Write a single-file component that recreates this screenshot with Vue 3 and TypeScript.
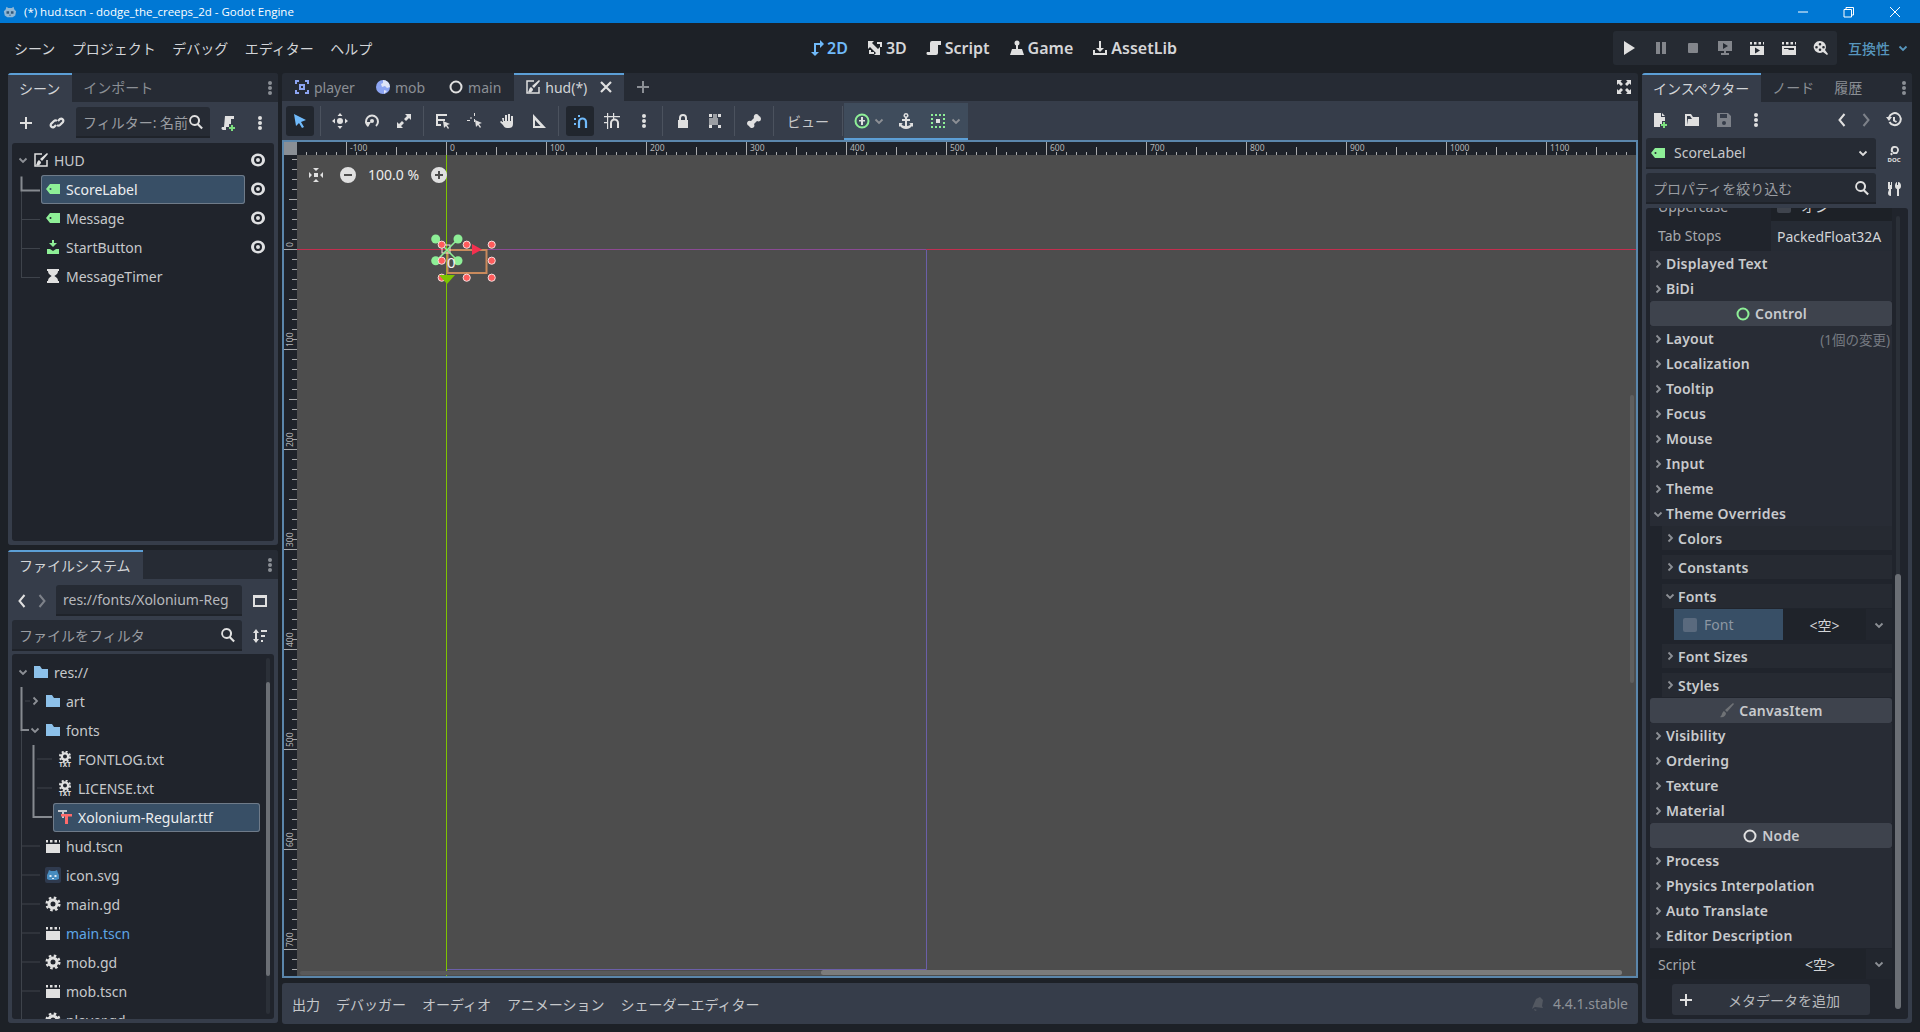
<template>
  <div class="editor">
    <!-- иконки -->
    <svg class="defs" width="0" height="0">
      <defs>
        <symbol id="plus" viewBox="0 0 16 16"><path d="M7 2h2v5h5v2H9v5H7V9H2V7h5z" /></symbol>
        <symbol id="link" viewBox="0 0 16 16"><g fill="none" stroke="currentColor" stroke-width="2.2"><path d="M7 10 5 12a2.2 2.2 0 0 1-3-3l3-3a2.2 2.2 0 0 1 3 0" /><path d="M9 6l2-2a2.2 2.2 0 0 1 3 3l-3 3a2.2 2.2 0 0 1-3 0" /></g></symbol>
        <symbol id="search" viewBox="0 0 16 16"><path d="M6.5 1a5.5 5.5 0 0 1 4.4 8.8l4 4-1.500 1.500-4-4A5.500 5.500 0 1 1 6.500 1zm0 2a3.500 3.500 0 1 0 0 7 3.500 3.500 0 0 0 0-7z" /></symbol>
        <symbol id="dots" viewBox="0 0 16 16"><circle cx="8" cy="3" r="2" /><circle cx="8" cy="8" r="2" /><circle cx="8" cy="13" r="2" /></symbol>
        <symbol id="scriptadd" viewBox="0 0 16 16"><path d="M5 1h9v3h-3v5H9v3H6v3H3a2 2 0 0 1-1-3h2z" /><path fill="#7de07f" d="M11 10h2v2h2v2h-2v2h-2v-2H9v-2h2z" /></symbol>
        <symbol id="eye" viewBox="0 0 16 16"><path fill-rule="evenodd" d="M8 1.500c4 0 7 3 7 6.500s-3 6.500-7 6.500S1 11.500 1 8s3-6.500 7-6.500zm0 2.500a4 4 0 1 0 0 8 4 4 0 0 0 0-8zm0 2a2 2 0 1 1 0 4 2 2 0 0 1 0-4z" /></symbol>
        <symbol id="chev" viewBox="0 0 12 12"><path fill="none" stroke="currentColor" stroke-width="1.8" d="M2.500 4.500 6 8l3.500-3.500" /></symbol>
        <symbol id="chevr" viewBox="0 0 12 12"><path fill="none" stroke="currentColor" stroke-width="1.8" d="M4.500 2.500 8 6 4.500 9.500" /></symbol>
        <symbol id="left" viewBox="0 0 16 16"><path fill="none" stroke="currentColor" stroke-width="2" d="M10.500 2 5.500 8l5 6" /></symbol>
        <symbol id="right" viewBox="0 0 16 16"><path fill="none" stroke="currentColor" stroke-width="2" d="M5.500 2l5 6-5 6" /></symbol>
        <symbol id="tag" viewBox="0 0 16 16"><path fill="#8eef97" fill-rule="evenodd" d="M5 3h10v10H5L1 8zm.5 4a1 1 0 1 0 0 2 1 1 0 0 0 0-2z" /></symbol>
        <symbol id="button" viewBox="0 0 16 16"><path fill="#8eef97" d="M7 1h2v3h3L8 8 4 4h3zM2 10h3l3 2 3-2h3v5H2z" /></symbol>
        <symbol id="hourglass" viewBox="0 0 16 16"><path d="M2 1h12v2h-1c0 3-2.500 4-3.500 5 1 1 3.500 2 3.500 5h1v2H2v-2h1c0-3 2.500-4 3.500-5C5.500 7 3 6 3 3H2z" /></symbol>
        <symbol id="control" viewBox="0 0 16 16"><path fill="none" stroke="currentColor" stroke-width="1.5" d="M9 2H2v12h12V8" /><path d="M14 1l1 1-6 7-2-2zM6 8l2 2c0 3-3 4-5 3 1-1 1-4 3-5z" /></symbol>
        <symbol id="folder" viewBox="0 0 16 16"><path fill="#8dc1ea" d="M1 2h6l2 3h6v9H1z" /></symbol>
        <symbol id="gear" viewBox="0 0 16 16"><circle cx="8" cy="8" r="4" fill="none" stroke="currentColor" stroke-width="3" /><circle cx="8" cy="8" r="6.3" fill="none" stroke="currentColor" stroke-width="2.5" stroke-dasharray="2.5 2.45" /></symbol>
        <symbol id="txtgear" viewBox="0 0 16 16"><g transform="translate(1.6 -.8) scale(.8)"><circle cx="8" cy="8" r="4" fill="none" stroke="currentColor" stroke-width="3" /><circle cx="8" cy="8" r="6.3" fill="none" stroke="currentColor" stroke-width="2.5" stroke-dasharray="2.5 2.45" /></g><text x="8" y="16" font-size="6.5" font-weight="700" text-anchor="middle" fill="currentColor">TXT</text></symbol>
        <symbol id="clap" viewBox="0 0 16 16"><path d="M1 6h14v9H1zM1 2h2v2.500H1zM5 2h2.500v2.500H5zM9.500 2H12v2.500H9.500zM14 2h1v2.500h-1z" /></symbol>
        <symbol id="font" viewBox="0 0 16 16"><path fill="#c9cbcf" d="M1 1h9v2H7v6H5V3H1z" /><path fill="#ff6b6b" d="M4 5h11v2.500h-4V15H8V7.500H4z" /></symbol>
        <symbol id="godot" viewBox="0 0 16 16"><rect width="16" height="16" rx="2" fill="#2f3a4e" /><path fill="#478cbf" d="M3 6l1-3 2 1h4l2-1 1 3 1 2v4l-3 1H4l-2-1V8z" /><path fill="#dfe9f2" d="M4.500 8h2v2h-2zM9.500 8h2v2h-2zM7 11h2v1H7z" /></symbol>
        <symbol id="godotw" viewBox="0 0 16 16"><path fill="#8fb7d6" d="M3 5l1-3 2 1.500h4L12 2l1 3 2 2-1 5-3 2H5l-3-2-1-5z" /><path fill="#33597a" d="M4 7h3v3H4zM9 7h3v3H9zM7 11h2v1H7z" /></symbol>
        <symbol id="pane" viewBox="0 0 16 16"><path fill-rule="evenodd" d="M1 2h14v12H1zm2 3v7h10V5z" /></symbol>
        <symbol id="sort" viewBox="0 0 16 16"><path d="M4 1l3 4H5v6h2l-3 4-3-4h2V5H1zM9 2h6v2H9zM9 7h4v2H9zM9 12h2v2H9z" /></symbol>
        <symbol id="node2d" viewBox="0 0 16 16"><path fill="#8da5f3" fill-rule="evenodd" d="M1 1h4v2H3v2H1zm10 0h4v4h-2V3h-2zM1 11h2v2h2v2H1zm12 0h2v4h-4v-2h2zM5 5h6v6H5zm2 2v2h2V7z" /></symbol>
        <symbol id="globe" viewBox="0 0 16 16"><circle cx="8" cy="8" r="7" fill="#8da5f3" /><path fill="#dfe4f7" d="M8 1a7 7 0 0 1 7 7l-3 1-2-2-3 1-1-3 2-1zM9 11l3 1-3 3z" /></symbol>
        <symbol id="ring" viewBox="0 0 16 16"><circle cx="8" cy="8" r="5.5" fill="none" stroke="currentColor" stroke-width="2" /></symbol>
        <symbol id="close" viewBox="0 0 16 16"><path fill="none" stroke="currentColor" stroke-width="2.2" d="M3 3l10 10M13 3 3 13" /></symbol>
        <symbol id="full" viewBox="0 0 16 16"><path d="M1 1h5L4.500 2.500 7 5 5 7 2.500 4.500 1 6zm14 0v5l-1.500-1.500L11 7 9 5l2.500-2.500L10 1zM1 15v-5l1.500 1.500L5 9l2 2-2.500 2.500L6 15zm14 0h-5l1.500-1.500L9 11l2-2 2.500 2.500L15 10z" /></symbol>
        <symbol id="select" viewBox="0 0 16 16"><path fill="#70bafa" d="M2 1l12 6-5 2 3 5-2 1-3-5-3 3z" /></symbol>
        <symbol id="move" viewBox="0 0 16 16"><path d="M8 0l2.500 3h-5zM8 16l-2.500-3h5zM0 8l3-2.500v5zM16 8l-3 2.500v-5z" /><circle cx="8" cy="8" r="3" /></symbol>
        <symbol id="rotate" viewBox="0 0 16 16"><path fill="none" stroke="currentColor" stroke-width="2" d="M4 13a6 6 0 1 1 8 0" /><circle cx="8" cy="8" r="2" /><path d="M1 9h6l-3 5z" /></symbol>
        <symbol id="scale" viewBox="0 0 16 16"><path d="M9 1h6v6l-2-2-3 3-2-2 3-3zM7 15H1V9l2 2 3-3 2 2-3 3z" /></symbol>
        <symbol id="list" viewBox="0 0 16 16"><path d="M1 1h11v2H3v3h7v2H3v3h3v2H1z" /><path d="M8 8l7 3-3 1 2 3-1 1-2-3-2 2z" /></symbol>
        <symbol id="pivot" viewBox="0 0 16 16"><path d="M7 0h1v3H7zM7 6h1v3H7zM0 7h3v1H0zM4 4l1 1-1 1-1-1z" /><path d="M8 7l7 3-3 1 2 3-1 1-2-3-2 2z" /></symbol>
        <symbol id="hand" viewBox="0 0 16 16"><path d="M3 5h2v3h1V2h2v6h1V1h2v7h1V3h2v8c0 3-2 4-4 4H8c-2 0-3-1-4-3L1 9l1-1 2 1z" /></symbol>
        <symbol id="ruler" viewBox="0 0 16 16"><path fill-rule="evenodd" d="M2 1l13 14H2zm2 6v6h5.500z" /></symbol>
        <symbol id="snap" viewBox="0 0 16 16"><path fill="none" stroke="#70bafa" stroke-width="2.2" d="M7 15V9a3.500 3.500 0 0 1 7 0v6" /><path fill="#70bafa" d="M2 5h2v2H2zM2 10h2v2H2zM6 2h2v2H6z" /></symbol>
        <symbol id="grid" viewBox="0 0 16 16"><path d="M3 0h1.200v16H3zM9 0h1.200v6H9zM0 3h16v1.200H0zM0 9h3.500v1.200H0z" /><path fill="none" stroke="currentColor" stroke-width="2" d="M7 15V10a3.500 3.500 0 0 1 7 0v5" /></symbol>
        <symbol id="lock" viewBox="0 0 16 16"><path fill-rule="evenodd" d="M8 1a4 4 0 0 1 4 4v2h1v8H3V7h1V5a4 4 0 0 1 4-4zm0 2a2 2 0 0 0-2 2v2h4V5a2 2 0 0 0-2-2z" /></symbol>
        <symbol id="group" viewBox="0 0 16 16"><path d="M2 1h3v3H2zM11 1h3v3h-3zM11 12h3v3h-3zM2 12h3v3H2z" /><path opacity=".6" d="M2 5h9v7H2zM6 1h4v4H6z" /></symbol>
        <symbol id="bone" viewBox="0 0 16 16"><path d="M10 1a3 3 0 0 1 3 2 3 3 0 0 1 1 5 3 3 0 0 1-3 0l-3 3a3 3 0 0 1 0 3 3 3 0 0 1-5-1 3 3 0 0 1-2-3 3 3 0 0 1 4-2l3-3a3 3 0 0 1 2-4z" /></symbol>
        <symbol id="anchorring" viewBox="0 0 16 16"><circle cx="8" cy="8" r="6.5" fill="none" stroke="#8eef97" stroke-width="2" /><path d="M7 4h2v3h2v1.500H9V12H7V8.500H5V7h2z" /></symbol>
        <symbol id="anchor" viewBox="0 0 16 16"><path fill-rule="evenodd" d="M8 0a2.500 2.500 0 0 1 1 4.800V6h3v2H9v5c2 0 3-1 3.500-2L11 10h4v4l-1-1c-1 1.500-3 3-6 3s-5-1.500-6-3l-1 1v-4h4l-1.500 1C4 12 5 13 7 13V8H4V6h3V4.800A2.500 2.500 0 0 1 8 0zm0 1.500a1 1 0 1 0 0 2 1 1 0 0 0 0-2z" /></symbol>
        <symbol id="dotted" viewBox="0 0 16 16"><path fill="#8eef97" d="M1 1h2v2H1zM5 1h2v2H5zM9 1h2v2H9zM13 1h2v2h-2zM1 5h2v2H1zM13 5h2v2h-2zM1 9h2v2H1zM13 9h2v2h-2zM1 13h2v2H1zM5 13h2v2H5zM9 13h2v2H9zM13 13h2v2h-2z" /><path d="M6 6h4v4H6z" /></symbol>
        <symbol id="recenter" viewBox="0 0 16 16"><rect x="6" y="6" width="4" height="4" /><path d="M5 1h6L8 4zM5 15h6l-3-3zM1 5v6l3-3zM15 5v6l-3-3z" /></symbol>
        <symbol id="minusc" viewBox="0 0 16 16"><path fill-rule="evenodd" d="M8 0a8 8 0 1 1 0 16A8 8 0 0 1 8 0zM4 7v2h8V7z" /></symbol>
        <symbol id="plusc" viewBox="0 0 16 16"><path fill-rule="evenodd" d="M8 0a8 8 0 1 1 0 16A8 8 0 0 1 8 0zM7 4v3H4v2h3v3h2V9h3V7H9V4z" /></symbol>
        <symbol id="w2d" viewBox="0 0 16 16"><path fill="#70bafa" d="M6 3h6V0l4 4-4 4V5H8v7h3l-4 4-4-4h3z" /></symbol>
        <symbol id="w3d" viewBox="0 0 16 16"><path d="M1 1h6L5 3l6 6 2-2v8H7l2-2-6-6-2 2zM10 2h5v5h-2V4h-3zM2 10h2v2h3v2H2z" /></symbol>
        <symbol id="script" viewBox="0 0 16 16"><path d="M6 1h9v4h-3v8a2 2 0 0 1-2 2H2a2 2 0 0 1-1-3h3V3a2 2 0 0 1 2-2z" /></symbol>
        <symbol id="game" viewBox="0 0 16 16"><circle cx="8" cy="3" r="2.500" /><path d="M7 5h2v5H7zM3 9h10l2 6H1z" /></symbol>
        <symbol id="asset" viewBox="0 0 16 16"><path d="M7 1h2v7h3l-4 4-4-4h3zM1 10h2v3h10v-3h2v5H1z" /></symbol>
        <symbol id="play" viewBox="0 0 16 16"><path d="M3 1l11 7-11 7z" /></symbol>
        <symbol id="pause" viewBox="0 0 16 16"><path d="M3 2h4v12H3zM9 2h4v12H9z" /></symbol>
        <symbol id="stop" viewBox="0 0 16 16"><rect x="3" y="3" width="10" height="10" rx="1" /></symbol>
        <symbol id="remote" viewBox="0 0 16 16"><path fill-rule="evenodd" d="M1 1h14v10H9v2h3v2H4v-2h3v-2H1zm5 2v6l5-3z" /></symbol>
        <symbol id="clapplay" viewBox="0 0 16 16"><path fill-rule="evenodd" d="M1 6h14v9H1zm5 1.500v6l5-3z" /><path d="M1 2h2v2.500H1zM5 2h2.500v2.500H5zM9.500 2H12v2.500H9.500zM14 2h1v2.500h-1z" /></symbol>
        <symbol id="clapfolder" viewBox="0 0 16 16"><path fill-rule="evenodd" d="M1 6h14v9H1zm2 2v5h10V8z" /><path d="M3 9h4l1 1h5v3H3zM1 2h2v2.500H1zM5 2h2.500v2.500H5zM9.500 2H12v2.500H9.500zM14 2h1v2.500h-1z" /></symbol>
        <symbol id="reel" viewBox="0 0 16 16"><path fill-rule="evenodd" d="M7 1a6 6 0 0 1 6 6 6 6 0 0 1-1 3l3 4-1 1-4-3a6 6 0 1 1-3-11zM7 3a1.300 1.300 0 1 0 0 2.600A1.300 1.300 0 0 0 7 3zM3.500 6a1.300 1.300 0 1 0 0 2.600 1.300 1.300 0 0 0 0-2.600zm7 0a1.300 1.300 0 1 0 0 2.600 1.300 1.300 0 0 0 0-2.600zM7 8.500a1.300 1.300 0 1 0 0 2.600 1.300 1.300 0 0 0 0-2.600z" /></symbol>
        <symbol id="newdoc" viewBox="0 0 16 16"><path d="M2 1h7v4h4v4h-3v3H8v3H2zM10 1l3 3h-3z" /><path fill="#7de07f" d="M11 10h2v2h2v2h-2v2h-2v-2H9v-2h2z" /></symbol>
        <symbol id="folderopen" viewBox="0 0 16 16"><path fill-rule="evenodd" d="M1 2h6l2 3h6v9H1zm2 2v8l1 1h9V7H8L6 4z" /><path d="M3 13l1-6h4l2-1h5v8H3z" /></symbol>
        <symbol id="save" viewBox="0 0 16 16"><path fill-rule="evenodd" d="M1 1h11l3 3v11H1zm3 1v4h7V2zm4 7a2 2 0 1 0 0 4 2 2 0 0 0 0-4z" /></symbol>
        <symbol id="history" viewBox="0 0 16 16"><path fill="none" stroke="currentColor" stroke-width="2" d="M3.500 10A6 6 0 1 0 3 5.500M8 5v3.500l2.500 1.500" /><path d="M0 5h6l-3 4z" /></symbol>
        <symbol id="doc" viewBox="0 0 16 16"><path fill-rule="evenodd" d="M9 0a4 4 0 0 1 3 6.500L11 8 8.500 8A4 4 0 0 1 9 0zm0 1.800a2.200 2.200 0 1 0 0 4.400 2.200 2.200 0 0 0 0-4.400zM6 6l1.500 1.500-2 2L4 8z" /><text x="8" y="16" font-size="6" font-weight="700" text-anchor="middle" fill="currentColor">DOC</text></symbol>
        <symbol id="tools" viewBox="0 0 16 16"><path d="M2 1h2v3h1V1h1v7H5v7c-2 0-3-1-3-3 0-1 1-3 1-4H2zM11 1v3h1V1c2 0 3 2 3 4s-1 3-2 3v7h-2V8c-1 0-2-1-2-3s1-4 2-4z" /></symbol>
        <symbol id="brush" viewBox="0 0 16 16"><path d="M15 1l-1-1-8 7 2 2zM5 8l2 2c0 3-3 5-6 4 2-1 2-5 4-6z" /></symbol>
        <symbol id="bell" viewBox="0 0 16 16"><path d="M11 1l3 3-1 6 1 2-8-1-3 2 1-3 3-7zM5 13l3 1-2 1z" /></symbol>
      </defs>
    </svg>

    <header class="titlebar">
      <svg class="title-logo"><use href="#godotw" /></svg>
      <span>(*) hud.tscn - dodge_the_creeps_2d - Godot Engine</span>
      <div class="win-btns">
        <svg viewBox="0 0 12 12"><path d="M1 6h10" /></svg>
        <svg viewBox="0 0 12 12"><path d="M1 3.500h7.500V11H1zM3 3.500V1.500h7.500V9H8.500" /></svg>
        <svg viewBox="0 0 12 12"><path d="M1 1l10 10M11 1 1 11" /></svg>
      </div>
    </header>

    <div class="menubar">
      <nav class="menus">
        <span v-for="m in menus" :key="m">{{ m }}</span>
      </nav>
      <div class="workspaces">
        <span v-for="w in workspaces" :key="w.name" class="ws" :class="{ on: w.name === '2D' }">
          <svg class="ic"><use :href="'#' + w.icon" /></svg>{{ w.name }}
        </span>
      </div>
      <div class="run-box">
        <span v-for="r in runIcons" :key="r.icon" class="run" :class="{ dim: r.dim }">
          <svg class="ic"><use :href="'#' + r.icon" /></svg>
        </span>
      </div>
      <div class="renderer">互換性<svg class="chev"><use href="#chev" /></svg></div>
    </div>

    <div class="workspace">
      <!-- левая колонка -->
      <div class="side">
        <section class="dock scene-dock">
          <div class="dock-tabs">
            <span class="dock-tab active">シーン</span>
            <span class="dock-tab">インポート</span>
            <svg class="ic dots"><use href="#dots" /></svg>
          </div>
          <div class="dock-body">
            <div class="scene-tools">
              <svg class="ic tool-a"><use href="#plus" /></svg>
              <svg class="ic tool-b"><use href="#link" /></svg>
              <div class="field filter">
                <span class="field-text">フィルター: 名前</span>
                <svg class="ic"><use href="#search" /></svg>
              </div>
              <svg class="ic tool-c"><use href="#scriptadd" /></svg>
              <svg class="ic tool-d"><use href="#dots" /></svg>
            </div>
            <div class="tree scene-tree">
              <svg class="guides" viewBox="12 143 262 397">
                <path class="thin" d="M21.5 190V277M21 219H40M21 248H40M21 277H40" />
                <path class="thick" d="M21.5 176V190H40" />
              </svg>
              <div v-for="n in sceneTree" :key="n.name" class="row" :style="{ paddingLeft: 5 + n.depth * 12 + 'px' }">
                <svg class="chev"><use v-if="n.open" href="#chev" /></svg>
                <div class="cell" :class="{ sel: n.sel }">
                  <svg class="ic"><use :href="'#' + n.icon" /></svg>
                  <span>{{ n.name }}</span>
                </div>
                <svg class="ic eye"><use v-if="n.eye" href="#eye" /></svg>
              </div>
            </div>
          </div>
        </section>

        <section class="dock fs-dock">
          <div class="dock-tabs">
            <span class="dock-tab active">ファイルシステム</span>
            <svg class="ic dots"><use href="#dots" /></svg>
          </div>
          <div class="dock-body">
            <div class="fs-path">
              <svg class="ic nav"><use href="#left" /></svg>
              <svg class="ic nav off"><use href="#right" /></svg>
              <div class="field path"><span class="field-text">res://fonts/Xolonium-Reg</span></div>
              <svg class="ic fs-side"><use href="#pane" /></svg>
            </div>
            <div class="fs-filter">
              <div class="field grow">
                <span class="field-text dim">ファイルをフィルタ</span>
                <svg class="ic"><use href="#search" /></svg>
              </div>
              <svg class="ic fs-side"><use href="#sort" /></svg>
            </div>
            <div class="tree fs-tree">
              <svg class="guides" viewBox="12 655 262 365">
                <path class="thin" d="M25 702H30M21.5 731V1020M21 847H40M21 876H40M21 905H40M21 934H40M21 963H40M21 992H40M37 760H52M37 789H52" />
                <path class="thick" d="M21.5 688V731H29M33.5 746V818H52" />
              </svg>
              <div v-for="f in files" :key="f.name" class="row" :style="{ paddingLeft: 5 + f.depth * 12 + 'px' }">
                <svg class="chev"><use v-if="f.chev" :href="'#' + f.chev" /></svg>
                <div class="cell" :class="{ sel: f.sel, link: f.link }">
                  <svg class="ic"><use :href="'#' + f.icon" /></svg>
                  <span>{{ f.name }}</span>
                </div>
              </div>
              <div class="fs-scroll"><i></i></div>
            </div>
          </div>
        </section>
      </div>

      <!-- центр -->
      <main class="center">
        <div class="scene-tabs">
          <div v-for="t in sceneTabs" :key="t.name" class="scene-tab">
            <svg class="ic"><use :href="'#' + t.icon" /></svg>{{ t.name }}
          </div>
          <div class="scene-tab active">
            <svg class="ic"><use href="#control" /></svg>hud(*)
            <svg class="ic tab-x"><use href="#close" /></svg>
          </div>
          <svg class="ic tab-plus"><use href="#plus" /></svg>
          <svg class="ic tab-full"><use href="#full" /></svg>
        </div>

        <div class="toolbar">
          <template v-for="(t, i) in tools" :key="i">
            <i v-if="t.sep" class="sep" :class="t.sep"></i>
            <span v-else-if="t.label" class="tool-label">{{ t.label }}</span>
            <span v-else class="tool" :class="{ pressed: t.on }">
              <svg class="ic"><use :href="'#' + t.icon" /></svg>
            </span>
          </template>
          <div class="anchor-group">
            <svg class="ic"><use href="#anchorring" /></svg>
            <svg class="chev"><use href="#chev" /></svg>
            <svg class="ic mid"><use href="#anchor" /></svg>
            <svg class="ic"><use href="#dotted" /></svg>
            <svg class="chev"><use href="#chev" /></svg>
          </div>
        </div>

        <div class="viewport">
          <svg class="canvas" width="1352" height="834" viewBox="284 142 1352 834">
            <!-- линии сцены -->
            <path d="M926.5 250V969.5H447" fill="none" stroke="#6b5fa8" />
            <path d="M297 249.5H926.5" stroke="#c22e4e" />
            <path d="M447 249.5H926.5" stroke="#8a4a94" />
            <path d="M926.5 249.5H1636" stroke="#c22e4e" />
            <path d="M446.5 142V976" stroke="#7ec400" />

            <!-- линейки -->
            <rect x="284" y="142" width="13" height="13" fill="#8a8f95" />
            <rect x="297" y="142" width="1339" height="13" fill="#1f232a" />
            <rect x="284" y="155" width="13" height="821" fill="#1f232a" />
            <path v-for="t in hTicks" :key="'h' + t.x" :d="`M${t.x}.5 ${t.y}V155`" stroke="#a8a9ab" />
            <path v-for="t in vTicks" :key="'v' + t.y" :d="`M${t.x} ${t.y}.5H297`" stroke="#a8a9ab" />
            <text v-for="l in hLabels" :key="'hl' + l" class="ruler-text" :x="447 + l + 3" y="151">{{ l }}</text>
            <text
              v-for="l in vLabels"
              :key="'vl' + l"
              class="ruler-text"
              :transform="`translate(293 ${250 + l - 3}) rotate(-90)`"
            >{{ l }}</text>

            <!-- гизмо метки -->
            <rect x="447.5" y="250" width="39" height="23" fill="none" stroke="#c98a5c" stroke-width="2" />
            <rect x="442" y="245" width="8" height="8" fill="none" stroke="#ffd9d9" />
            <g stroke="#8eef97" stroke-width="1.5">
              <path d="M447 250 436 239M447 250 458 239M447 250 436 261M447 250 458 261" />
            </g>
            <g fill="#8eef97">
              <circle cx="435.7" cy="239" r="4.5" />
              <circle cx="458" cy="239" r="4.5" />
              <circle cx="435.7" cy="260.7" r="4.5" />
              <circle cx="458" cy="260.7" r="4.5" />
            </g>
            <g fill="#ff5c5c" stroke="#f6dede">
              <circle v-for="h in handles" :key="h[0] + '-' + h[1]" :cx="h[0]" :cy="h[1]" r="3.6" />
            </g>
            <text class="score" x="447" y="268">0</text>
            <path d="M472 244 482 249.5 472 255z" fill="#f5304f" />
            <path d="M439 275H455L447 284z" fill="#7ec400" />

            <!-- полосы прокрутки -->
            <rect x="300" y="971" width="1322" height="4" rx="2" fill="#59595a" />
            <rect x="821" y="970" width="801" height="5" rx="2.5" fill="#7b7b7b" />
            <rect x="1630" y="395" width="4" height="288" rx="2" fill="#5f5f5f" />
          </svg>
          <div class="zoom-widget">
            <svg class="ic recenter"><use href="#recenter" /></svg>
            <svg class="ic round"><use href="#minusc" /></svg>
            <span>100.0 %</span>
            <svg class="ic round end"><use href="#plusc" /></svg>
          </div>
        </div>

        <footer class="bottom">
          <span v-for="b in bottomTabs" :key="b">{{ b }}</span>
          <svg class="ic bell"><use href="#bell" /></svg>
          <span class="version">4.4.1.stable</span>
        </footer>
      </main>

      <!-- инспектор -->
      <aside class="dock inspector">
        <div class="dock-tabs">
          <span class="dock-tab active">インスペクター</span>
          <span class="dock-tab">ノード</span>
          <span class="dock-tab">履歴</span>
          <svg class="ic dots"><use href="#dots" /></svg>
        </div>
        <div class="dock-body insp-body">
          <div class="insp-tools">
            <svg class="ic"><use href="#newdoc" /></svg>
            <svg class="ic"><use href="#folderopen" /></svg>
            <svg class="ic off"><use href="#save" /></svg>
            <svg class="ic"><use href="#dots" /></svg>
            <svg class="ic back"><use href="#left" /></svg>
            <svg class="ic off fwd"><use href="#right" /></svg>
            <svg class="ic"><use href="#history" /></svg>
          </div>
          <div class="insp-line">
            <div class="field grow class-field">
              <svg class="ic"><use href="#tag" /></svg>
              <span class="field-text class-name">ScoreLabel</span>
              <svg class="chev light"><use href="#chev" /></svg>
            </div>
            <svg class="ic"><use href="#doc" /></svg>
          </div>
          <div class="insp-line">
            <div class="field grow">
              <span class="field-text dim">プロパティを絞り込む</span>
              <svg class="ic"><use href="#search" /></svg>
            </div>
            <svg class="ic"><use href="#tools" /></svg>
          </div>
          <div class="props">
            <div class="props-inner">
              <div class="prop upper">
                <span>Uppercase</span>
                <div class="prop-val"><i class="check"></i>オン</div>
              </div>
              <div class="prop stops">
                <span>Tab Stops</span>
                <div class="prop-val boxed">PackedFloat32A</div>
              </div>

              <template v-for="p in props" :key="p.name">
                <div v-if="p.kind === 'head'" class="head">
                  <svg class="ic" :class="p.cls"><use :href="'#' + p.icon" /></svg>{{ p.name }}
                </div>
                <div v-else-if="p.kind === 'font'" class="font-row">
                  <div class="font-key"><i class="check"></i>{{ p.name }}</div>
                  <div class="font-val">&lt;空&gt;</div>
                  <div class="drop"><svg class="chev"><use href="#chev" /></svg></div>
                </div>
                <div v-else class="sec" :class="p.kind">
                  <svg class="chev"><use :href="p.open ? '#chev' : '#chevr'" /></svg>
                  <span>{{ p.name }}</span>
                  <em v-if="p.note">{{ p.note }}</em>
                </div>
              </template>

              <div class="script-row">
                <span>Script</span>
                <div class="font-val">&lt;空&gt;</div>
                <div class="drop"><svg class="chev"><use href="#chev" /></svg></div>
              </div>
              <div class="meta-btn">
                <svg class="ic"><use href="#plus" /></svg>
                <span>メタデータを追加</span>
              </div>
            </div>
            <div class="props-scroll"><i></i></div>
          </div>
        </div>
      </aside>
    </div>
  </div>
</template>

<script setup lang="ts">
import { computed } from "vue";

const menus = ["シーン", "プロジェクト", "デバッグ", "エディター", "ヘルプ"];

const workspaces = [
  { name: "2D", icon: "w2d" },
  { name: "3D", icon: "w3d" },
  { name: "Script", icon: "script" },
  { name: "Game", icon: "game" },
  { name: "AssetLib", icon: "asset" },
];

const runIcons = [
  { icon: "play", dim: false },
  { icon: "pause", dim: true },
  { icon: "stop", dim: true },
  { icon: "remote", dim: true },
  { icon: "clapplay", dim: false },
  { icon: "clapfolder", dim: false },
  { icon: "reel", dim: false },
];

const sceneTree = [
  { name: "HUD", depth: 0, icon: "control", open: true, eye: true, sel: false },
  { name: "ScoreLabel", depth: 1, icon: "tag", open: false, eye: true, sel: true },
  { name: "Message", depth: 1, icon: "tag", open: false, eye: true, sel: false },
  { name: "StartButton", depth: 1, icon: "button", open: false, eye: true, sel: false },
  { name: "MessageTimer", depth: 1, icon: "hourglass", open: false, eye: false, sel: false },
];

type FileRow = {
  name: string;
  depth: number;
  icon: string;
  chev?: string;
  sel?: boolean;
  link?: boolean;
};

const files: FileRow[] = [
  { name: "res://", depth: 0, icon: "folder", chev: "chev" },
  { name: "art", depth: 1, icon: "folder", chev: "chevr" },
  { name: "fonts", depth: 1, icon: "folder", chev: "chev" },
  { name: "FONTLOG.txt", depth: 2, icon: "txtgear" },
  { name: "LICENSE.txt", depth: 2, icon: "txtgear" },
  { name: "Xolonium-Regular.ttf", depth: 2, icon: "font", sel: true },
  { name: "hud.tscn", depth: 1, icon: "clap" },
  { name: "icon.svg", depth: 1, icon: "godot" },
  { name: "main.gd", depth: 1, icon: "gear" },
  { name: "main.tscn", depth: 1, icon: "clap", link: true },
  { name: "mob.gd", depth: 1, icon: "gear" },
  { name: "mob.tscn", depth: 1, icon: "clap" },
  { name: "player.gd", depth: 1, icon: "gear" },
];

const sceneTabs = [
  { name: "player", icon: "node2d" },
  { name: "mob", icon: "globe" },
  { name: "main", icon: "ring" },
];

type ToolItem = { icon?: string; on?: boolean; sep?: string; label?: string };

const tools: ToolItem[] = [
  { icon: "select", on: true },
  { sep: "first" },
  { icon: "move" },
  { icon: "rotate" },
  { icon: "scale" },
  { sep: "s" },
  { icon: "list" },
  { icon: "pivot" },
  { icon: "hand" },
  { icon: "ruler" },
  { sep: "wide" },
  { icon: "snap", on: true },
  { icon: "grid" },
  { icon: "dots" },
  { sep: "w" },
  { icon: "lock" },
  { icon: "group" },
  { sep: "s" },
  { icon: "bone" },
  { sep: "s" },
  { label: "ビュー" },
  { sep: "s" },
];

const bottomTabs = ["出力", "デバッガー", "オーディオ", "アニメーション", "シェーダーエディター"];

type PropRow = { name: string; kind: string; icon?: string; cls?: string; open?: boolean; note?: string };

const props: PropRow[] = [
  { name: "Displayed Text", kind: "top" },
  { name: "BiDi", kind: "top" },
  { name: "Control", kind: "head", icon: "ring", cls: "green" },
  { name: "Layout", kind: "top", note: "(1個の変更)" },
  { name: "Localization", kind: "top" },
  { name: "Tooltip", kind: "top" },
  { name: "Focus", kind: "top" },
  { name: "Mouse", kind: "top" },
  { name: "Input", kind: "top" },
  { name: "Theme", kind: "top" },
  { name: "Theme Overrides", kind: "top", open: true },
  { name: "Colors", kind: "sub" },
  { name: "Constants", kind: "sub" },
  { name: "Fonts", kind: "sub", open: true },
  { name: "Font", kind: "font" },
  { name: "Font Sizes", kind: "sub" },
  { name: "Styles", kind: "sub last" },
  { name: "CanvasItem", kind: "head", icon: "brush", cls: "grey" },
  { name: "Visibility", kind: "top" },
  { name: "Ordering", kind: "top" },
  { name: "Texture", kind: "top" },
  { name: "Material", kind: "top" },
  { name: "Node", kind: "head", icon: "ring", cls: "" },
  { name: "Process", kind: "top" },
  { name: "Physics Interpolation", kind: "top" },
  { name: "Auto Translate", kind: "top" },
  { name: "Editor Description", kind: "top" },
];

// линейки, ноль сцены в (447, 250)
const hTicks = computed(() => {
  const out: { x: number; y: number }[] = [];
  for (let v = -140; v <= 1180; v += 10) {
    const y = v % 100 === 0 ? 142 : v % 50 === 0 ? 147 : 152;
    out.push({ x: 446 + v, y });
  }
  return out;
});

const vTicks = computed(() => {
  const out: { x: number; y: number }[] = [];
  for (let v = -90; v <= 720; v += 10) {
    const x = v % 100 === 0 ? 284 : v % 50 === 0 ? 289 : 292;
    out.push({ x, y: 249 + v });
  }
  return out;
});

const hLabels = [-100, 0, 100, 200, 300, 400, 500, 600, 700, 800, 900, 1000, 1100];
const vLabels = [0, 100, 200, 300, 400, 500, 600, 700];

const handles = [
  [441.7, 244.7],
  [466.7, 244.7],
  [491.7, 244.7],
  [441.7, 260.7],
  [491.7, 260.7],
  [441.7, 277.7],
  [466.7, 277.7],
  [491.7, 277.7],
];
</script>

<style>
html,
body {
  margin: 0;
  background: #1d2127;
}
</style>

<style scoped>
.editor {
  width: 1920px;
  height: 1032px;
  overflow: hidden;
  display: flex;
  flex-direction: column;
  background: #1d2127;
  color: #d2d4d7;
  font: 14px "Noto Sans", "Noto Sans CJK JP", sans-serif;
}
.defs {
  position: absolute;
}
.ic {
  width: 16px;
  height: 16px;
  flex: none;
  fill: currentColor;
  color: #e0e0e0;
}
.chev {
  width: 12px;
  height: 12px;
  flex: none;
  color: #8d9096;
}
.ic.off {
  color: #7d8189;
}

/* заголовок окна */
.titlebar {
  height: 23px;
  flex: none;
  display: flex;
  align-items: center;
  background: #0078d4;
  color: #fff;
  font: 11.5px "Open Sans", sans-serif;
  padding-left: 3px;
}
.title-logo {
  width: 14px;
  height: 14px;
  margin-right: 7px;
}
.win-btns {
  margin-left: auto;
  display: flex;
  gap: 34px;
  padding-right: 19px;
}
.win-btns svg {
  width: 12px;
  height: 12px;
  fill: none;
  stroke: #fff;
}

/* главное меню */
.menubar {
  height: 50px;
  flex: none;
  display: flex;
  align-items: center;
  padding-left: 14px;
}
.menus {
  display: flex;
  gap: 16.5px;
  width: 794px;
}
.workspaces {
  display: flex;
  gap: 19px;
  font-size: 16px;
  font-weight: 600;
}
.ws {
  display: flex;
  align-items: center;
  gap: 3px;
  color: #d5d6d8;
}
.ws.on {
  color: #70bafa;
}
.run-box {
  margin-left: auto;
  display: flex;
  height: 34px;
  width: 224px;
  background: #262b33;
  border-radius: 3px;
}
.run {
  width: 32px;
  display: flex;
  align-items: center;
  justify-content: center;
}
.run.dim .ic {
  color: #83868c;
}
.renderer {
  display: flex;
  align-items: center;
  gap: 7px;
  width: 64px;
  margin: 0 8px 0 11px;
  color: #5796bd;
  font-weight: 500;
}
.renderer .chev {
  color: #5796bd;
}

/* основная сетка */
.workspace {
  display: flex;
  gap: 4px;
  padding: 0 8px;
  height: 951px;
}
.side {
  width: 270px;
  flex: none;
  display: flex;
  flex-direction: column;
  gap: 5px;
}
.dock {
  display: flex;
  flex-direction: column;
  background: #262b34;
  border-radius: 3px;
  overflow: hidden;
}
.scene-dock {
  height: 472px;
  flex: none;
}
.fs-dock {
  height: 473px;
  flex: none;
}
.dock-tabs {
  height: 29px;
  flex: none;
  display: flex;
  align-items: center;
  background: #262b34;
}
.dock-tab {
  height: 29px;
  padding: 0 12px 0 11px;
  line-height: 30px;
  color: #8b8f95;
  box-sizing: border-box;
  white-space: nowrap;
}
.dock-tab + .dock-tab + .dock-tab {
  margin-left: -3px;
}
.dock-tab.active {
  background: #363d4a;
  color: #d2d4d7;
  border-top: 2px solid #5c9fd6;
  line-height: 27px;
}
.ic.dots {
  margin-left: auto;
  color: #8b8f95;
}
.dock-body {
  flex: 1;
  min-height: 0;
  background: #363d4a;
  display: flex;
  flex-direction: column;
  padding: 0 4px 4px;
}
.field {
  height: 31px;
  box-sizing: border-box;
  display: flex;
  align-items: center;
  background: #262b34;
  border-bottom: 2px solid #1f232a;
  border-radius: 3px 3px 0 0;
  padding: 0 6px 0 7px;
  color: #b6b8bc;
}
.field-text {
  flex: 1;
  min-width: 0;
  white-space: nowrap;
}
.field-text.dim {
  color: #9a9da2;
}
.grow {
  flex: 1;
  min-width: 0;
}
.scene-tools {
  height: 41px;
  flex: none;
  display: flex;
  align-items: center;
}
.tool-a {
  margin-left: 6px;
}
.tool-b {
  margin-left: 15px;
}
.filter {
  width: 134px;
  margin-left: 11px;
  color: #9a9da2;
}
.tool-c {
  margin-left: 10px;
}
.tool-d {
  margin-left: 16px;
}
.tree {
  position: relative;
  flex: 1;
  min-height: 0;
  overflow: hidden;
  background: #20242c;
  border-radius: 3px;
  padding-top: 3.5px;
}
.scene-tree {
  padding-top: 2.5px;
}
.guides {
  position: absolute;
  inset: 0;
  width: 100%;
  height: 100%;
  pointer-events: none;
}
.guides path {
  fill: none;
}
.thin {
  stroke: #3e434b;
}
.thick {
  stroke: #868a90;
  stroke-width: 2;
}
.row {
  position: relative;
  height: 29px;
  display: flex;
  align-items: center;
  box-sizing: border-box;
  padding-right: 8px;
}
.cell {
  flex: 1;
  height: 29px;
  box-sizing: border-box;
  display: flex;
  align-items: center;
  gap: 5px;
  padding-left: 4px;
  margin-right: 5px;
  white-space: nowrap;
  color: #c6c8cb;
  border-radius: 3px;
}
.cell.sel {
  background: #384f66;
  box-shadow: inset 0 0 0 1px #6f7b89;
  color: #eceef0;
}
.cell.link {
  color: #5ea6e6;
}
.ic.eye {
  color: #dfe0e2;
}
.fs-path,
.fs-filter {
  flex: none;
  display: flex;
  align-items: center;
}
.fs-path {
  height: 31px;
  margin: 6px 0 4px;
}
.fs-filter {
  height: 31px;
  margin-bottom: 3px;
}
.nav {
  margin-left: 2px;
}
.nav.off {
  margin-left: 4px;
}
.path {
  width: 186px;
  margin-left: 6px;
}
.fs-side {
  margin-left: auto;
  margin-right: 6px;
}
.fs-filter .field {
  margin-right: 10px;
}
.fs-filter .fs-side {
  margin-left: 0;
}
.fs-tree .row {
  padding-right: 9px;
}
.fs-scroll {
  position: absolute;
  top: 4px;
  bottom: 5px;
  right: 4px;
  width: 4px;
  background: #2b3038;
  border-radius: 2px;
}
.fs-scroll i {
  position: absolute;
  left: 0;
  right: 0;
  top: 24px;
  height: 294px;
  background: #6b6f75;
  border-radius: 2px;
}

/* центр */
.center {
  flex: 1;
  min-width: 0;
  display: flex;
  flex-direction: column;
}
.scene-tabs {
  height: 28px;
  flex: none;
  display: flex;
  align-items: center;
  background: #262b34;
  border-radius: 3px 3px 0 0;
  padding-left: 6px;
  color: #8b8f95;
}
.scene-tab {
  height: 28px;
  box-sizing: border-box;
  display: flex;
  align-items: center;
  gap: 4px;
  padding: 0 6px;
  margin-right: 8px;
  white-space: nowrap;
}
.scene-tab:nth-child(3) {
  margin-left: 3px;
}
.scene-tab.active {
  width: 110px;
  background: #363d4a;
  border-top: 2px solid #5c9fd6;
  color: #d2d4d7;
  padding: 0 10px 2px 11px;
  margin-left: -1px;
}
.tab-x {
  margin-left: auto;
}
.ic.tab-plus {
  margin-left: 3px;
  color: #8b8f95;
}
.tab-full {
  margin-left: auto;
  margin-right: 6px;
}
.toolbar {
  height: 39px;
  flex: none;
  display: flex;
  align-items: center;
  background: #363d4a;
  padding-left: 4px;
}
.tool {
  width: 32px;
  height: 30px;
  display: flex;
  align-items: center;
  justify-content: center;
}
.tool.pressed {
  width: 28px;
  margin: 0 2px;
  background: #21262e;
  border-radius: 3px;
}
.toolbar > .tool.pressed:first-child {
  margin: 0;
}
.sep {
  width: 1px;
  height: 30px;
  background: #4b525e;
  margin: 0 3px;
}
.sep.first {
  margin: 0 3px 0 6px;
}
.sep.wide {
  margin: 0 5px 0 3px;
}
.sep.w {
  margin: 0 4px 0 2px;
}
.tool-label {
  width: 62px;
  text-align: center;
  color: #c6c8cb;
}
.anchor-group {
  width: 124px;
  height: 37px;
  margin-left: -2px;
  margin-top: 2px;
  box-sizing: border-box;
  display: flex;
  align-items: center;
  padding-left: 10px;
  background: #3f4c5c;
  border-bottom: 2px solid #5c9fd6;
}
.anchor-group .chev {
  margin-left: 3px;
}
.anchor-group .chev:last-child {
  margin-left: 4px;
}
.anchor-group .mid {
  margin: 0 16px 0 13px;
}
.viewport {
  position: relative;
  height: 838px;
  flex: none;
  box-sizing: border-box;
  border: 2px solid #5b86ab;
  background: #4d4d4d;
  overflow: hidden;
}
.canvas {
  display: block;
}
.ruler-text {
  font: 8.5px "Noto Sans", sans-serif;
  fill: #b5b6b8;
}
.score {
  font: 15px "Noto Sans", sans-serif;
  fill: #f2f2f2;
}
.zoom-widget {
  position: absolute;
  left: 24px;
  top: 23px;
  display: flex;
  align-items: center;
  color: #ececec;
  font-size: 14px;
}
.zoom-widget .round {
  margin-left: 16px;
}
.zoom-widget .end {
  margin-left: 12px;
}
.zoom-widget span {
  margin-left: 12px;
}
.bottom {
  margin-top: 5px;
  height: 41px;
  flex: none;
  display: flex;
  align-items: center;
  gap: 16px;
  padding: 0 10px;
  background: #363d4a;
  border-radius: 3px;
  color: #c6c8cb;
}
.ic.bell {
  margin-left: auto;
  margin-right: -8px;
  color: #535861;
}
.version {
  color: #8f9399;
}

/* инспектор */
.inspector {
  width: 270px;
  flex: none;
  height: 950px;
}
.insp-body {
  position: relative;
}
.insp-tools {
  height: 36px;
  flex: none;
  display: flex;
  align-items: center;
  gap: 16px;
  padding: 0 6px;
}
.insp-tools .back {
  margin-left: auto;
  margin-right: -8px;
}
.insp-tools .fwd {
  margin-right: -4px;
}
.insp-line {
  display: flex;
  align-items: center;
  gap: 10px;
  padding-right: 6px;
  margin-bottom: 4px;
}
.class-field {
  padding-left: 4px;
}
.class-name {
  margin-left: 8px;
  color: #c6c8cb;
}
.chev.light {
  color: #dcdcdc;
  margin-right: 1px;
}
.props {
  position: relative;
  flex: 1;
  min-height: 0;
  overflow: hidden;
  background: #20242c;
  padding: 0 16px 0 4px;
  border-radius: 3px;
}
.props-inner {
  margin-top: -17px;
}
.prop {
  height: 30px;
  display: flex;
  align-items: center;
  color: #a6a8ac;
}
.prop > span {
  width: 121px;
  flex: none;
  padding-left: 8px;
  box-sizing: border-box;
}
.stops > span {
  padding-bottom: 2px;
}
.prop-val {
  flex: 1;
  height: 100%;
  display: flex;
  align-items: center;
  color: #d2d4d7;
  padding-left: 6px;
  white-space: nowrap;
  background: #1d2127;
}
.prop-val.boxed {
  background: #262b34;
}
.check {
  width: 14px;
  height: 14px;
  background: #5a6a7e;
  border-radius: 2px;
  flex: none;
}
.upper .check {
  margin-right: 10px;
  background: #3f444d;
}
.sec {
  display: flex;
  align-items: center;
  background: #282c35;
  font-weight: 600;
  letter-spacing: 0.2px;
  color: #c8cacd;
  white-space: nowrap;
}
.sec .chev {
  margin: 0 2px;
}
.sec.top {
  height: 25px;
}
.sec.sub {
  height: 24px;
  margin: 0 0 5px 12px;
  background: #262a32;
}
.sec.last {
  margin-bottom: 1px;
}
.sec em {
  margin-left: auto;
  margin-right: 2px;
  font-style: normal;
  font-weight: 400;
  font-size: 13.5px;
  letter-spacing: 0;
  color: #767a81;
}
.head {
  height: 25px;
  display: flex;
  align-items: center;
  justify-content: center;
  gap: 4px;
  background: #3e434d;
  border-radius: 3px;
  font-weight: 600;
  letter-spacing: 0.2px;
  color: #c8cacd;
}
.head .green {
  color: #8eef97;
}
.head .grey {
  color: #6f7276;
}
.font-row {
  height: 31px;
  display: flex;
  align-items: stretch;
  margin: -4px 0 4px 24px;
}
.font-key {
  width: 109px;
  display: flex;
  align-items: center;
  gap: 7px;
  padding-left: 9px;
  box-sizing: border-box;
  background: #384f66;
  color: #8d97a3;
}
.font-val {
  flex: 1;
  display: flex;
  align-items: center;
  justify-content: center;
  background: #1f232a;
  color: #d2d4d7;
}
.drop {
  width: 26px;
  display: flex;
  align-items: center;
  justify-content: center;
  background: #22262e;
}
.script-row {
  height: 30px;
  margin-top: 1px;
  display: flex;
  align-items: stretch;
  background: #1f232a;
}
.script-row > span {
  width: 124px;
  flex: none;
  padding-left: 8px;
  box-sizing: border-box;
  display: flex;
  align-items: center;
  color: #a6a8ac;
}
.meta-btn {
  position: relative;
  height: 31px;
  margin: 5px 22px 0;
  display: flex;
  align-items: center;
  justify-content: center;
  background: #2f343e;
  border-radius: 3px;
  color: #b6b8bc;
  padding-left: 26px;
}
.meta-btn .ic {
  position: absolute;
  left: 6px;
}
.props-scroll {
  position: absolute;
  top: 8px;
  bottom: 10px;
  right: 8px;
  width: 4px;
  background: #2b3038;
  border-radius: 2px;
}
.props-scroll i {
  position: absolute;
  left: -1px;
  right: -1px;
  bottom: 0;
  height: 435px;
  background: #6b6f75;
  border-radius: 3px;
}
</style>
